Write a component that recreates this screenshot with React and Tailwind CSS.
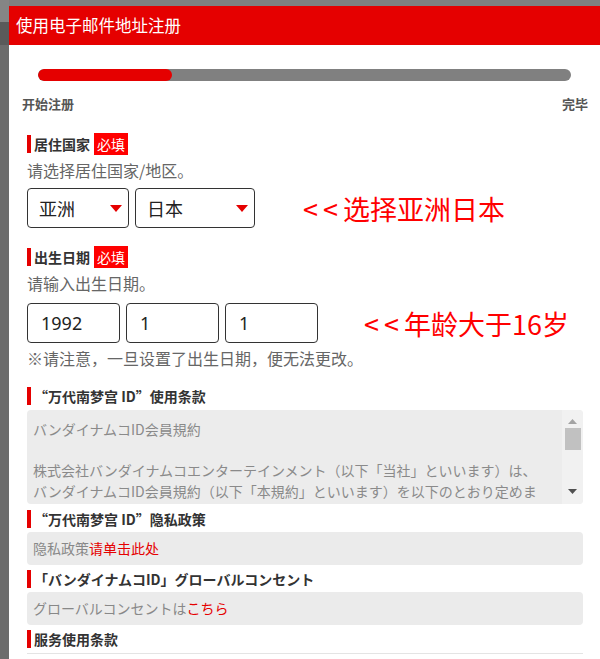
import React from "react";

const F = { fontFamily: '"Noto Sans CJK SC", "Noto Sans", sans-serif' };

function Label({ text, required }) {
  return (
    <div className="flex items-center h-[22px]">
      <div className="w-[4px] h-[18px] bg-[#e50000]" />
      <span className="ml-[3px] text-[14px] font-bold text-[#333] leading-none">{text}</span>
      {required && (
        <span className="ml-[4px] h-[22px] px-[3px] flex items-center bg-[#ff0000] text-white text-[14px] leading-none">必填</span>
      )}
    </div>
  );
}

function Title({ text }) {
  return (
    <div className="flex items-center h-[18px]">
      <div className="w-[4px] h-[18px] bg-[#e50000]" />
      <span className="ml-[3px] text-[14px] font-bold text-[#333] leading-none whitespace-nowrap">{text}</span>
    </div>
  );
}

function Select({ value, w }) {
  return (
    <div className={`${w} h-[40px] border border-[#333] rounded-[4px] flex items-center justify-between pl-[11px] pr-[6px]`}>
      <span className="text-[18px] text-[#222]">{value}</span>
      <svg width="12" height="7" viewBox="0 0 12 7"><polygon points="0,0 12,0 6,7" fill="#e50000" /></svg>
    </div>
  );
}

function Input({ value }) {
  return (
    <div className="w-[93px] h-[40px] border border-[#333] rounded-[4px] flex items-center pl-[13px]">
      <span className="text-[18px] text-[#222]" style={{ fontFamily: '"Noto Sans", sans-serif' }}>{value}</span>
    </div>
  );
}

export default function App() {
  return (
    <div className="w-[600px] h-[659px] overflow-hidden flex bg-[#6f6f6f]" style={F}>
      <div className="w-[9px] flex flex-col shrink-0">
        <div className="h-[22px] shrink-0 bg-[#858585]" />
        <div className="h-[23px] shrink-0 bg-[#5a5a5a]" />
        <div className="flex-1 bg-[#6c6c6c]" />
      </div>
      <div className="flex-1 flex flex-col overflow-hidden">
        <div className="h-[6px] shrink-0 bg-[#808080]" />
        <div className="flex-1 bg-white overflow-hidden">
          <div className="h-[39px] bg-[#e50000] flex items-center pl-[7px]">
            <span className="text-white text-[16.5px]">使用电子邮件地址注册</span>
          </div>
          <div className="mt-[24px] mx-[29px] h-[12px] rounded-full bg-[#808080] overflow-hidden">
            <div className="w-[134px] h-full rounded-full bg-[#e50000]" />
          </div>
          <div className="mt-[14px] h-[18px] pl-[13px] pr-[12px] flex justify-between items-center text-[13px] font-bold text-[#555]">
            <span>开始注册</span>
            <span>完毕</span>
          </div>
          <div className="pl-[18px] pr-[17px]">
            <div className="pt-[20px]"><Label text="居住国家" required /></div>
            <div className="mt-[4px] h-[22px] flex items-center text-[16px] text-[#666]">请选择居住国家/地区。</div>
            <div className="mt-[7px] flex items-center">
              <Select value="亚洲" w="w-[102px]" />
              <div className="ml-[6px]"><Select value="日本" w="w-[120px]" /></div>
              <span className="ml-[48px] text-[27px] text-[#ff0000] leading-none whitespace-nowrap"><span className="tracking-[5px]">&lt;&lt;</span>选择亚洲日本</span>
            </div>
            <div className="mt-[18px]"><Label text="出生日期" required /></div>
            <div className="mt-[4px] h-[22px] flex items-center text-[16px] text-[#666]">请输入出生日期。</div>
            <div className="mt-[9px] flex items-center">
              <Input value="1992" />
              <div className="ml-[6px]"><Input value="1" /></div>
              <div className="ml-[6px]"><Input value="1" /></div>
              <span className="ml-[46px] text-[27px] text-[#ff0000] leading-none whitespace-nowrap"><span className="tracking-[5px]">&lt;&lt;</span>年龄大于16岁</span>
            </div>
            <div className="mt-[4px] h-[22px] flex items-center text-[16px] text-[#666] whitespace-nowrap">※请注意，一旦设置了出生日期，便无法更改。</div>
            <div className="mt-[18px]"><Title text="“万代南梦宫 ID”使用条款" /></div>
            <div className="mt-[5px] h-[94px] rounded-[4px] bg-[#ececec] flex overflow-hidden">
              <div className="flex-1 pl-[6px] pt-[9px] text-[14px] leading-[20.5px] text-[#8a8a8a] whitespace-nowrap overflow-hidden">
                <div>バンダイナムコID会員規約</div>
                <div>&nbsp;</div>
                <div>株式会社バンダイナムコエンターテインメント（以下「当社」といいます）は、</div>
                <div>バンダイナムコID会員規約（以下「本規約」といいます）を以下のとおり定めま</div>
                <div>す。本規約は、当社が提供する「バンダイナムコID」に適用されます。</div>
              </div>
              <div className="w-[21px] bg-[#f1f1f1] flex flex-col items-center pt-[9px] pb-[10px]">
                <svg width="9" height="5" viewBox="0 0 9 5"><polygon points="0,5 9,5 4.5,0" fill="#a3a3a3" /></svg>
                <div className="mt-[4px] w-[16px] h-[22px] bg-[#c1c1c1]" />
                <div className="flex-1" />
                <svg width="9" height="5" viewBox="0 0 9 5"><polygon points="0,0 9,0 4.5,5" fill="#505050" /></svg>
              </div>
            </div>
            <div className="mt-[6px]"><Title text="“万代南梦宫 ID”隐私政策" /></div>
            <div className="mt-[4px] h-[33px] rounded-[4px] bg-[#ebebeb] flex items-center pl-[6px] text-[14px] text-[#888]">
              隐私政策<span className="text-[#e50000]">请单击此处</span>
            </div>
            <div className="mt-[5px]"><Title text="「バンダイナムコID」グローバルコンセント" /></div>
            <div className="mt-[4px] h-[33px] rounded-[4px] bg-[#ebebeb] flex items-center pl-[6px] text-[14px] text-[#888]">
              グローバルコンセントは<span className="text-[#e50000]">こちら</span>
            </div>
            <div className="mt-[5px]"><Title text="服务使用条款" /></div>
            <div className="mt-[5px] h-[40px] border-t border-[#e4e4e4]" />
          </div>
        </div>
      </div>
    </div>
  );
}
